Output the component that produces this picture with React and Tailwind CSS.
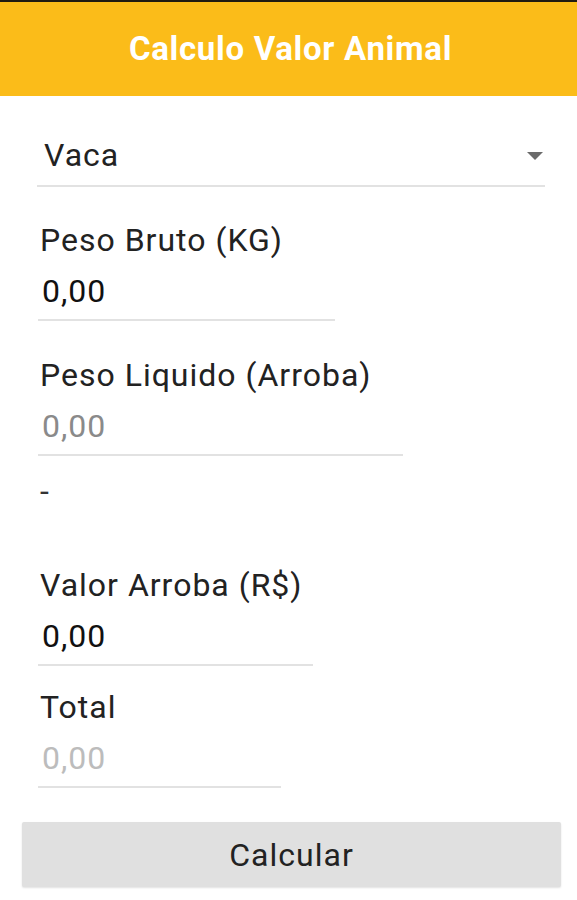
const font = { fontFamily: 'Roboto, "Liberation Sans", sans-serif' };

function Field({ label, value, valueClass, lineClass, wrapClass }) {
  return (
    <div className={wrapClass}>
      <div className="text-[32px] leading-[36px] tracking-[1px] text-[#222] pl-[2px]">{label}</div>
      <div className={`mt-[15px] pb-[10px] border-b-2 border-[#e2e2e2] ${lineClass}`}>
        <div className={`text-[32px] leading-[36px] tracking-[1px] pl-[4px] ${valueClass}`}>{value}</div>
      </div>
    </div>
  );
}

export default function App() {
  return (
    <div className="w-[577px] h-[900px] bg-white" style={font}>
      {/* Toolbar */}
      <header className="h-[96px] border-t-2 border-[#1f1a10] bg-[#fbbc19] flex items-center justify-center">
        <h1 className="text-white font-bold text-[33px] tracking-[0.7px] pl-[4px]">Calculo Valor Animal</h1>
      </header>

      <div className="pl-[38px] pr-[32px]">
        {/* Spinner */}
        <div className="mt-[41px] pb-[12px] border-b-2 border-[#e2e2e2] flex items-center justify-between w-[508px] -ml-[1px]">
          <span className="text-[32px] leading-[36px] tracking-[1px] text-[#222] pl-[7px]">Vaca</span>
          <svg width="18" height="10" viewBox="0 0 18 10" className="mr-[1px] mt-[2px]">
            <path d="M1 1 L17 1 L9 9 Z" fill="#6b6b6b" />
          </svg>
        </div>

        <Field
          wrapClass="mt-[35px]"
          label="Peso Bruto (KG)"
          value="0,00"
          valueClass="text-[#111]"
          lineClass="w-[297px]"
        />
        <Field
          wrapClass="mt-[36px]"
          label="Peso Liquido (Arroba)"
          value="0,00"
          valueClass="text-[#8a8a8a]"
          lineClass="w-[365px]"
        />

        <div className="mt-[17px] text-[32px] leading-[36px] text-[#333] pl-[2px]">-</div>

        <Field
          wrapClass="mt-[58px]"
          label="Valor Arroba (R$)"
          value="0,00"
          valueClass="text-[#111]"
          lineClass="w-[275px]"
        />
        <Field
          wrapClass="mt-[23px]"
          label="Total"
          value="0,00"
          valueClass="text-[#bcbcbc]"
          lineClass="w-[243px]"
        />
      </div>

      <div className="px-[16px] mt-[34px]">
        <button className="w-[539px] ml-[6px] h-[65px] bg-[#e0e0e0] rounded-[2px] shadow-[0_1px_2px_rgba(0,0,0,0.12)] text-[32px] tracking-[1px] text-[#222]">
          Calcular
        </button>
      </div>
    </div>
  );
}
